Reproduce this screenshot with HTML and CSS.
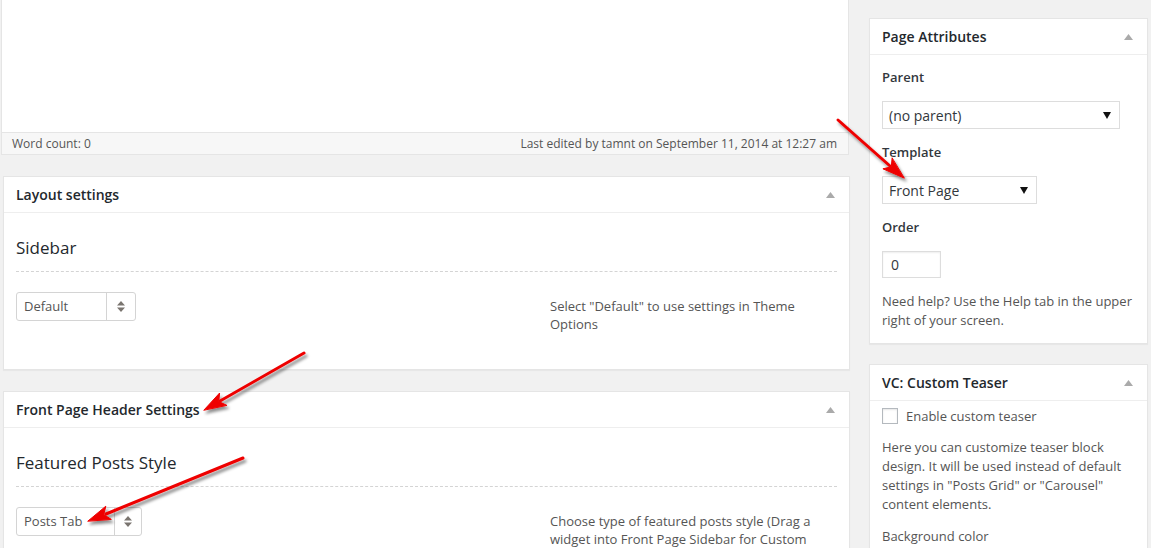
FILE: index.html
```html
<!DOCTYPE html>
<html lang="en">
<head>
<meta charset="utf-8">
<title>Edit Page</title>
<link rel="stylesheet" href="styles.css">
</head>
<body>
<div class="page">
  <div class="main-col">
    <div class="editor">
      <div class="editor-area"></div>
      <div class="status">
        <span>Word count: 0</span>
        <span>Last edited by tamnt on September 11, 2014 at 12:27 am</span>
      </div>
    </div>

    <div class="postbox">
      <div class="pb-head">
        <h2 class="pb-title">Layout settings</h2>
        <svg class="toggle" width="9" height="6" viewBox="0 0 9 6"><path d="M0 6 L4.5 0 L9 6 Z"/></svg>
      </div>
      <div class="pb-body meta">
        <h3 class="field-title">Sidebar</h3>
        <div class="field-row">
          <div class="field-input">
            <div class="fancy-select sel-sidebar">
              <span class="fs-value">Default</span>
              <span class="fs-arrows"><svg width="8" height="11" viewBox="0 0 8 11"><path d="M0 4.5 L4 0 L8 4.5 Z M0 6.5 L8 6.5 L4 11 Z"/></svg></span>
            </div>
          </div>
          <p class="field-desc">Select "Default" to use settings in Theme Options</p>
        </div>
      </div>
    </div>

    <div class="postbox">
      <div class="pb-head">
        <h2 class="pb-title">Front Page Header Settings</h2>
        <svg class="toggle" width="9" height="6" viewBox="0 0 9 6"><path d="M0 6 L4.5 0 L9 6 Z"/></svg>
      </div>
      <div class="pb-body meta">
        <h3 class="field-title">Featured Posts Style</h3>
        <div class="field-row">
          <div class="field-input">
            <div class="fancy-select sel-posts">
              <span class="fs-value">Posts Tab</span>
              <span class="fs-arrows"><svg width="8" height="11" viewBox="0 0 8 11"><path d="M0 4.5 L4 0 L8 4.5 Z M0 6.5 L8 6.5 L4 11 Z"/></svg></span>
            </div>
          </div>
          <p class="field-desc">Choose type of featured posts style (Drag a widget into Front Page Sidebar for Custom Posts)</p>
        </div>
      </div>
    </div>
  </div>

  <div class="side-col">
    <div class="postbox side-box">
      <div class="pb-head">
        <h2 class="pb-title">Page Attributes</h2>
        <svg class="toggle" width="9" height="6" viewBox="0 0 9 6"><path d="M0 6 L4.5 0 L9 6 Z"/></svg>
      </div>
      <div class="pb-body attrs">
        <p class="attr-label">Parent</p>
        <div class="native-select sel-parent"><span>(no parent)</span><svg width="8" height="7" viewBox="0 0 8 7"><path d="M0 0 L8 0 L4 7 Z"/></svg></div>
        <p class="attr-label">Template</p>
        <div class="native-select sel-template"><span>Front Page</span><svg width="8" height="7" viewBox="0 0 8 7"><path d="M0 0 L8 0 L4 7 Z"/></svg></div>
        <p class="attr-label">Order</p>
        <div class="text-input order-input">0</div>
        <p class="help">Need help? Use the Help tab in the upper right of your screen.</p>
      </div>
    </div>

    <div class="postbox side-box">
      <div class="pb-head">
        <h2 class="pb-title">VC: Custom Teaser</h2>
        <svg class="toggle" width="9" height="6" viewBox="0 0 9 6"><path d="M0 6 L4.5 0 L9 6 Z"/></svg>
      </div>
      <div class="pb-body teaser">
        <label class="check-row"><span class="checkbox"></span><span>Enable custom teaser</span></label>
        <p class="teaser-text">Here you can customize teaser block design. It will be used instead of default settings in "Posts Grid" or "Carousel" content elements.</p>
        <p class="bg-label">Background color</p>
        <div class="text-input color-input"></div>
      </div>
    </div>
  </div>
</div>

<svg class="annot" width="1151" height="548" viewBox="0 0 1151 548">
  <defs>
    <filter id="sh" x="-20%" y="-20%" width="140%" height="140%">
      <feDropShadow dx="2" dy="3" stdDeviation="1.6" flood-color="#000" flood-opacity="0.45"/>
    </filter>
  </defs>
  <g filter="url(#sh)" fill="#ee0000" stroke="#ee0000" stroke-linecap="round" stroke-linejoin="round">
    <line x1="838" y1="120" x2="890" y2="166" stroke-width="3"/>
    <path d="M904 178 L882.9 168.8 L891.3 166.8 L892.1 158.2 Z" stroke-width="1"/>

    <line x1="304" y1="353" x2="220" y2="401" stroke-width="3"/>
    <path d="M204 410 L219.6 393 L218.8 401.6 L226.6 405.2 Z" stroke-width="1"/>

    <line x1="243" y1="458" x2="106" y2="514" stroke-width="3"/>
    <path d="M88 521 L105.8 506.2 L103.8 514.6 L111 519.2 Z" stroke-width="1"/>
  </g>
</svg>
</body>
</html>
```

FILE: styles.css
```css
* { box-sizing: border-box; }

html, body {
  margin: 0;
  padding: 0;
}

body {
  background: #f1f1f1;
  font-family: "Open Sans", "Noto Sans", "Liberation Sans", sans-serif;
  font-size: 13px;
  color: #444;
  width: 1151px;
  height: 548px;
  overflow: hidden;
  position: relative;
}

.page {
  display: flex;
  align-items: flex-start;
  gap: 19px;
  padding-left: 1px;
}

.main-col {
  width: 849px;
  flex: none;
}

.side-col {
  width: 279px;
  flex: none;
  padding-top: 18px;
}

/* Editor */
.editor {
  margin-right: 1px;
}

.editor-area {
  height: 132px;
  background: #fff;
  border-left: 1px solid #e5e5e5;
  border-right: 1px solid #e5e5e5;
}

.status {
  display: flex;
  justify-content: space-between;
  height: 23px;
  line-height: 21px;
  padding: 0 11px 0 10px;
  background: #f7f7f7;
  border: 1px solid #e5e5e5;
  font-size: 12px;
  color: #555;
}

/* Postboxes */
.postbox {
  background: #fff;
  border: 1px solid #e5e5e5;
  box-shadow: 0 1px 1px rgba(0, 0, 0, 0.04);
  margin: 21px 0 0 2px;
}

.side-box {
  margin: 0 0 20px 0;
}

.pb-head {
  display: flex;
  align-items: center;
  justify-content: space-between;
  height: 36px;
  padding: 0 14px 0 12px;
  border-bottom: 1px solid #eee;
}

.pb-title {
  margin: 0;
  font-size: 14px;
  font-weight: 600;
  color: #23282d;
  line-height: 20px;
}

.toggle {
  fill: #aaa;
  display: block;
}

.pb-body {
  padding: 0 12px;
}

/* Meta box fields */
.meta {
  padding-top: 23px;
  padding-bottom: 36px;
}

.field-title {
  margin: 0;
  font-size: 17px;
  font-weight: 400;
  line-height: 24px;
  color: #23282d;
  padding-bottom: 11px;
  border-bottom: 1px dashed #d4d4d4;
}

.field-row {
  display: flex;
  justify-content: space-between;
  align-items: flex-start;
  margin-top: 20px;
}

.field-desc {
  margin: 0;
  width: 287px;
  padding-top: 5px;
  font-size: 13px;
  line-height: 18px;
  color: #555;
}

.fancy-select {
  display: flex;
  height: 29px;
  border: 1px solid #d4d4d4;
  border-radius: 3px;
  background: #fff;
  color: #555;
}

.sel-sidebar { width: 120px; }
.sel-posts { width: 126px; }

.fs-value {
  flex: 1;
  padding-left: 7px;
  line-height: 27px;
  font-size: 13px;
}

.fs-arrows {
  width: 29px;
  border-left: 1px solid #d4d4d4;
  display: flex;
  align-items: center;
  justify-content: center;
}

.fs-arrows svg { fill: #7a7570; display: block; }

.sel-posts .fs-value { flex: none; width: 97px; }
.sel-posts .fs-arrows { flex: 1; }

/* Page attributes */
.attrs {
  padding-top: 13px;
  padding-bottom: 13px;
}

.attr-label {
  margin: 0 0 15px;
  font-size: 13px;
  font-weight: 600;
  line-height: 18px;
  color: #32373c;
}

.native-select {
  display: flex;
  align-items: center;
  justify-content: space-between;
  height: 28px;
  margin: 0 0 14px 0;
  padding: 0 8px 0 6px;
  border: 1px solid #ddd;
  background: #fff;
  font-size: 14px;
  color: #32373c;
}

.native-select svg { fill: #111; display: block; }

.sel-parent { width: 238px; }
.sel-template { width: 155px; }

.text-input {
  height: 27px;
  border: 1px solid #ddd;
  background: #fff;
  box-shadow: inset 0 1px 2px rgba(0, 0, 0, 0.07);
  font-size: 14px;
  line-height: 25px;
  padding-left: 8px;
  color: #32373c;
}

.order-input {
  width: 59px;
}

.help {
  margin: 14px 0 0;
  line-height: 19px;
  color: #555;
}

/* VC teaser */
.teaser {
  padding-top: 5px;
}

.check-row {
  display: flex;
  align-items: center;
  gap: 8px;
  height: 20px;
  color: #555;
  font-size: 13px;
}

.checkbox {
  width: 16px;
  height: 16px;
  border: 1px solid #b4b9be;
  background: #fff;
  box-shadow: inset 0 1px 2px rgba(0, 0, 0, 0.1);
}

.teaser-text {
  margin: 12px 0 0;
  line-height: 19px;
  color: #555;
}

.bg-label {
  margin: 13px 0 2px;
  line-height: 19px;
  color: #555;
}

.color-input {
  width: 171px;
}

/* Annotation arrows overlay */
.annot {
  position: absolute;
  left: 0;
  top: 0;
  pointer-events: none;
}
```
